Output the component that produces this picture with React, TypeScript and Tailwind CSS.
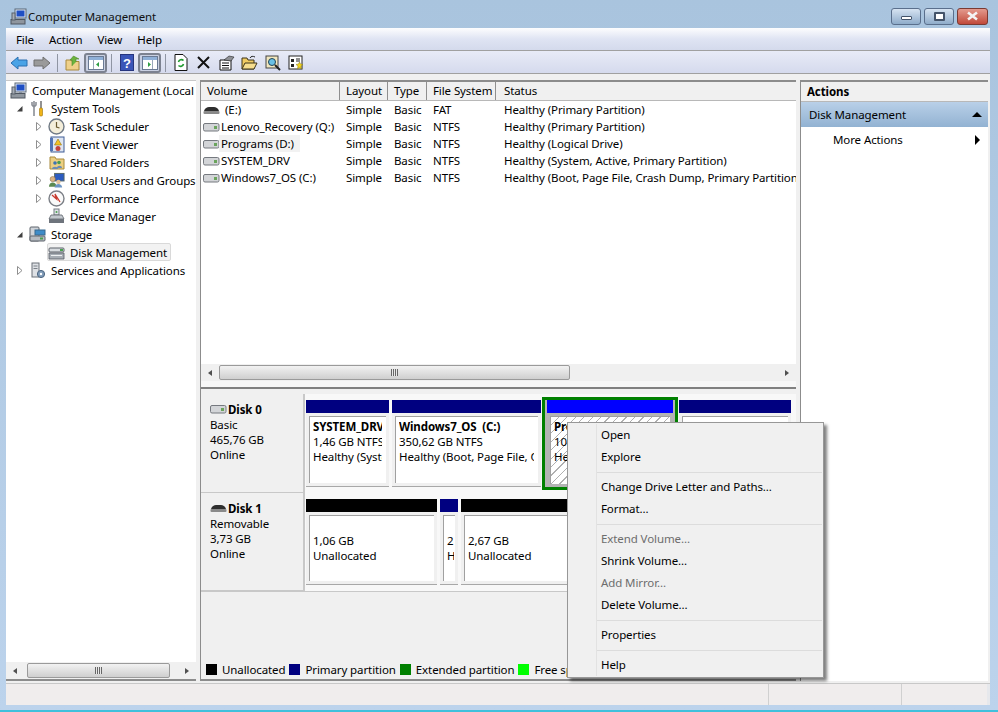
import type { ReactNode } from "react";

const FONT = "font-['Noto_Sans','Open_Sans',sans-serif]";

// small drawn icons -------------------------------------------------------

const ComputerIcon = () => (
  <svg width="17" height="17" viewBox="0 0 17 17">
    <rect x="5" y="1" width="11" height="9" fill="#dfe6f2" stroke="#5b6878" />
    <rect x="6.500" y="2.500" width="8" height="6" fill="#1f4fc4" />
    <rect x="9" y="10" width="3" height="2" fill="#8a94a3" />
    <rect x="1" y="11.500" width="14" height="4.500" fill="#8f969e" stroke="#4e5660" />
    <rect x="2" y="5" width="3" height="7" fill="#a8aeb6" stroke="#59616b" />
  </svg>
);

const ToolsIcon = () => (
  <svg width="16" height="17" viewBox="0 0 16 17">
    <path d="M4 1v5M2 2v3l2 2 2-2V2M4 7v9" fill="none" stroke="#8b8f96" strokeWidth="1.600" />
    <path d="M11 1v7" stroke="#777" strokeWidth="1.600" />
    <rect x="9.500" y="8" width="3" height="8" rx="1" fill="#f0b418" stroke="#9c7208" strokeWidth="0.600" />
  </svg>
);

const ClockIcon = () => (
  <svg width="17" height="17" viewBox="0 0 17 17">
    <circle cx="8.500" cy="8.500" r="7.500" fill="#f4eeda" stroke="#707a86" strokeWidth="1.400" />
    <path d="M8.500 4v5l3 1" fill="none" stroke="#6a5a30" strokeWidth="1.200" />
  </svg>
);

const EventIcon = () => (
  <svg width="16" height="17" viewBox="0 0 16 17">
    <rect x="2" y="1" width="13" height="15" fill="#dfe6f2" stroke="#3f5c96" />
    <rect x="1" y="2" width="3" height="13" fill="#5275b5" />
    <path d="M9 3l3.500 6h-7z" fill="#f4c325" stroke="#96730c" strokeWidth="0.600" />
    <circle cx="9" cy="12.500" r="2.500" fill="#c5433b" />
  </svg>
);

const FolderShareIcon = () => (
  <svg width="16" height="16" viewBox="0 0 16 16">
    <path d="M1 3h5l1 2h8v10H1z" fill="#eccf82" stroke="#a98a3c" />
    <circle cx="6" cy="9" r="1.800" fill="#3c73b4" />
    <circle cx="10" cy="8.500" r="1.800" fill="#4b9a50" />
    <path d="M3 15c0-3 6-3 6 0M8 14c0-3 5-3 5 0" fill="#6a8bb4" />
  </svg>
);

const UsersIcon = () => (
  <svg width="18" height="17" viewBox="0 0 18 17">
    <rect x="7" y="1" width="10" height="8" fill="#2c5bc0" stroke="#566" />
    <circle cx="5" cy="7" r="2.800" fill="#d9b184" stroke="#77613f" strokeWidth="0.500" />
    <path d="M1 15c0-6 8-6 8 0z" fill="#5c8a52" />
    <circle cx="11" cy="10" r="2.300" fill="#e6c39a" />
    <path d="M7 16c0-5 8-5 8 0z" fill="#6d95c4" />
  </svg>
);

const GaugeIcon = () => (
  <svg width="17" height="17" viewBox="0 0 17 17">
    <circle cx="8.500" cy="8.500" r="7.500" fill="#fafafa" stroke="#7b7f86" strokeWidth="1.400" />
    <path d="M4 5l4.500 4L7 4l5 8" fill="none" stroke="#c73a2e" strokeWidth="1.300" />
  </svg>
);

const DeviceIcon = () => (
  <svg width="17" height="16" viewBox="0 0 17 16">
    <rect x="6" y="1" width="5" height="6" fill="#dfe3e8" stroke="#747a82" />
    <circle cx="8.500" cy="4" r="1" fill="#4ba04f" />
    <path d="M3 7h11l2 4H1z" fill="#c3c8ce" stroke="#5d636b" strokeWidth="0.800" />
    <rect x="1" y="11" width="15" height="4" fill="#6e747c" />
  </svg>
);

const DiskMgmtIcon = () => (
  <svg width="17" height="15" viewBox="0 0 17 15">
    <rect x="1" y="3" width="15" height="4" rx="1" fill="#d8dce0" stroke="#5d636b" />
    <rect x="12" y="4" width="3" height="2" fill="#49a14f" />
    <path d="M1 8h15v6H1z" fill="#a7adb4" stroke="#565c64" strokeWidth="0.800" />
    <path d="M3 10.500h11" stroke="#eef0f2" />
  </svg>
);

const StorageIcon = () => (
  <svg width="17" height="16" viewBox="0 0 17 16">
    <rect x="1" y="1" width="9" height="14" rx="1" fill="#cfd3d8" stroke="#5f656d" />
    <rect x="6" y="4" width="10" height="5" fill="#3e8cc8" stroke="#38688e" />
    <rect x="1" y="10" width="15" height="5" rx="1" fill="#b6bbc1" stroke="#5f656d" />
    <rect x="11" y="11.500" width="3" height="2" fill="#4ba04f" />
  </svg>
);

const ServicesIcon = () => (
  <svg width="16" height="17" viewBox="0 0 16 17">
    <rect x="2" y="1" width="7" height="14" fill="#dee1e5" stroke="#6a7078" />
    <path d="M3.500 4h4M3.500 6.500h4" stroke="#7b8189" />
    <circle cx="11" cy="12" r="3.600" fill="#7f9bb8" stroke="#4c6580" />
    <circle cx="11" cy="12" r="1.200" fill="#fff" />
  </svg>
);

const HddIcon = ({ black = false }: { black?: boolean }) => (
  <svg width="17" height="10" viewBox="0 0 17 10" className="shrink-0">
    {black ? (
      <>
        <path d="M1 6c1-3 3-4 5-4h5c2 0 4 1 5 4z" fill="#2e2e2e" />
        <rect x="0.500" y="6" width="16" height="3" rx="1" fill="#8a8a8a" />
      </>
    ) : (
      <>
        <rect x="0.500" y="1.500" width="15.500" height="7.500" rx="1.500" fill="#d3d5d8" stroke="#75797f" />
        <rect x="11" y="4" width="3" height="3" fill="#6aa45c" />
      </>
    )}
  </svg>
);

const Triangle = ({ open }: { open: boolean }) =>
  open ? (
    <svg width="9" height="9" viewBox="0 0 9 9">
      <path d="M7.500 2v5.500H2z" fill="#404040" />
    </svg>
  ) : (
    <svg width="9" height="11" viewBox="0 0 9 11">
      <path d="M2.500 1.500l4.500 4-4.500 4z" fill="#fff" stroke="#8f8f8f" />
    </svg>
  );

// tree --------------------------------------------------------------------

const TREE: { label: string; level: 0 | 1 | 2; arrow?: "open" | "closed"; icon: ReactNode; selected?: boolean }[] = [
  { label: "Computer Management (Local", level: 0, icon: <ComputerIcon /> },
  { label: "System Tools", level: 1, arrow: "open", icon: <ToolsIcon /> },
  { label: "Task Scheduler", level: 2, arrow: "closed", icon: <ClockIcon /> },
  { label: "Event Viewer", level: 2, arrow: "closed", icon: <EventIcon /> },
  { label: "Shared Folders", level: 2, arrow: "closed", icon: <FolderShareIcon /> },
  { label: "Local Users and Groups", level: 2, arrow: "closed", icon: <UsersIcon /> },
  { label: "Performance", level: 2, arrow: "closed", icon: <GaugeIcon /> },
  { label: "Device Manager", level: 2, icon: <DeviceIcon /> },
  { label: "Storage", level: 1, arrow: "open", icon: <StorageIcon /> },
  { label: "Disk Management", level: 2, icon: <DiskMgmtIcon />, selected: true },
  { label: "Services and Applications", level: 1, arrow: "closed", icon: <ServicesIcon /> },
];

const TREE_INDENT = { 0: "pl-[3px]", 1: "pl-[9px]", 2: "pl-[28px]" };

const TreeRow = ({ row }: { row: (typeof TREE)[number] }) => (
  <div className={`flex h-[18px] items-center whitespace-nowrap ${TREE_INDENT[row.level]}`}>
    {row.level > 0 && (
      <span className="flex w-[13px] shrink-0 items-center justify-start">
        {row.arrow && <Triangle open={row.arrow === "open"} />}
      </span>
    )}
    <span
      className={`flex h-[18px] items-center gap-[5px] rounded-[2px] border pr-[3px] ${
        row.selected ? "border-[#d9d9d9] bg-[#f2f2f2]" : "border-transparent"
      }`}
    >
      <span className="flex w-[17px] shrink-0 justify-center">{row.icon}</span>
      <span>{row.label}</span>
    </span>
  </div>
);

// scrollbar ---------------------------------------------------------------

const HScroll = ({ thumbLeft, thumbWidth }: { thumbLeft: string; thumbWidth: string }) => (
  <div className="flex h-[17px] shrink-0 items-center bg-[#f0f0f0]">
    <span className="flex w-[18px] shrink-0 justify-center">
      <span className="h-0 w-0 border-y-[3.500px] border-r-[4px] border-y-transparent border-r-[#505050]" />
    </span>
    <div className={`flex-1 ${thumbLeft}`}>
      <div
        className={`flex h-[15px] items-center justify-center rounded-[2px] border border-[#9a9a9a] bg-gradient-to-b from-[#f2f2f2] to-[#cfcfcf] ${thumbWidth}`}
      >
        <span className="h-[7px] w-[7px] bg-[repeating-linear-gradient(90deg,#666_0,#666_1px,#e8e8e8_1px,#e8e8e8_2px)]" />
      </div>
    </div>
    <span className="flex w-[18px] shrink-0 justify-center">
      <span className="h-0 w-0 border-y-[3.500px] border-l-[4px] border-y-transparent border-l-[#505050]" />
    </span>
  </div>
);

// volume list -------------------------------------------------------------

const COLUMNS = [
  { label: "Volume", w: "w-[139px]" },
  { label: "Layout", w: "w-[48px]" },
  { label: "Type", w: "w-[39px]" },
  { label: "File System", w: "w-[69px]" },
  { label: "Status", w: "flex-1" },
];

const VOLUMES = [
  { name: "(E:)", black: true, fs: "FAT", status: "Healthy (Primary Partition)" },
  { name: "Lenovo_Recovery (Q:)", fs: "NTFS", status: "Healthy (Primary Partition)" },
  { name: "Programs (D:)", fs: "NTFS", status: "Healthy (Logical Drive)", focused: true },
  { name: "SYSTEM_DRV", fs: "NTFS", status: "Healthy (System, Active, Primary Partition)" },
  { name: "Windows7_OS (C:)", fs: "NTFS", status: "Healthy (Boot, Page File, Crash Dump, Primary Partition)" },
];

const VolumeRow = ({ v }: { v: (typeof VOLUMES)[number] }) => (
  <div className="flex h-[17px] items-center whitespace-nowrap">
    <div className="flex w-[139px] shrink-0 items-center pl-[2px]">
      <HddIcon black={v.black} />
      <span className={`-ml-[1px] h-[17px] pl-[2px] pr-[6px] ${v.black ? "ml-[3px]" : ""} ${v.focused ? "bg-[#f2f2f2]" : ""}`}>
        {v.name}
      </span>
    </div>
    <div className="w-[48px] shrink-0 pl-[6px]">Simple</div>
    <div className="w-[39px] shrink-0 pl-[6px]">Basic</div>
    <div className="w-[69px] shrink-0 pl-[6px]">{v.fs}</div>
    <div className="min-w-0 flex-1 overflow-hidden pl-[8px]">{v.status}</div>
  </div>
);

// disk map ----------------------------------------------------------------

const Partition = ({
  w,
  bar = "bg-[#000080]",
  lines,
  center = false,
  selected = false,
  hatched = false,
}: {
  w: string;
  bar?: string;
  lines: string[];
  center?: boolean;
  selected?: boolean;
  hatched?: boolean;
}) => (
  <div
    className={`flex shrink-0 flex-col ${w} ${
      selected ? "-mx-[2px] -my-[3px] border-[3px] border-[#008000] bg-[#b4b4b4] px-[2px]" : ""
    }`}
  >
    <div className={`h-[13px] shrink-0 ${bar}`} />
    <div className={`flex flex-1 p-[3px] ${selected ? "" : "border-b border-[#a8a8a8] bg-[#f0f0f0]"}`}>
      <div
        className={`flex min-w-0 flex-1 border-l border-t border-[#a0a0a0] pl-[3px] ${
          hatched
            ? "bg-[repeating-linear-gradient(135deg,#fff_0,#fff_5px,#b0b0b0_5px,#b0b0b0_6px)]"
            : "bg-white"
        }`}
      >
        <div
          className={`flex min-w-0 flex-1 flex-col overflow-hidden whitespace-pre leading-[15px] ${
            center ? "mr-[1px] justify-center pb-[2px]" : "mr-[4px] pt-[2px]"
          }`}
        >
          {lines.map((line, i) => (
            <span key={i} className={!center && i === 0 ? "font-bold" : ""}>
              {line}
            </span>
          ))}
        </div>
      </div>
    </div>
  </div>
);

const DiskLabel = ({ name, black, lines }: { name: string; black?: boolean; lines: string[] }) => (
  <div className="w-[104px] shrink-0 border-b border-r-2 border-[#c8c8c8] bg-[#f0f0f0] pl-[9px] pt-[7px] leading-[15px]">
    <div className="flex h-[16px] items-center gap-[1px] font-bold">
      <HddIcon black={black} />
      <span>{name}</span>
    </div>
    {lines.map(line => (
      <div key={line}>{line}</div>
    ))}
  </div>
);

const LEGEND = [
  { label: "Unallocated", color: "bg-black" },
  { label: "Primary partition", color: "bg-[#000080]" },
  { label: "Extended partition", color: "bg-[#008000]" },
  { label: "Free space", color: "bg-[#00ff00]" },
];

// context menu ------------------------------------------------------------

const MENU: ({ label: string; disabled?: boolean } | "sep")[] = [
  { label: "Open" },
  { label: "Explore" },
  "sep",
  { label: "Change Drive Letter and Paths..." },
  { label: "Format..." },
  "sep",
  { label: "Extend Volume...", disabled: true },
  { label: "Shrink Volume..." },
  { label: "Add Mirror...", disabled: true },
  { label: "Delete Volume..." },
  "sep",
  { label: "Properties" },
  "sep",
  { label: "Help" },
];

const ContextMenu = () => (
  <div className="absolute left-[567px] top-[422px] w-[257px] border border-[#979797] bg-[#f0f0f0] p-[1px] shadow-[3px_3px_3px_rgba(0,0,0,0.5)]">
    {MENU.map((item, i) =>
      item === "sep" ? (
        <div key={i} className="flex h-[8px] items-center">
          <div className="h-full w-[28px] shrink-0 border-r border-[#e2e2e2]" />
          <div className="h-[1px] flex-1 bg-[#dcdcdc]" />
        </div>
      ) : (
        <div key={i} className="flex h-[22px] items-center">
          <div className="h-full w-[28px] shrink-0 border-r border-[#e2e2e2]" />
          <span className={`pb-[2px] pl-[4px] ${item.disabled ? "text-[#6d6d6d]" : "text-black"}`}>{item.label}</span>
        </div>
      ),
    )}
  </div>
);

// toolbar -----------------------------------------------------------------

const Sep = () => <span className="mx-[3.500px] h-[18px] w-[1px] bg-[#8f95a3]" />;

const ToolBtn = ({ children, pressed }: { children: ReactNode; pressed?: boolean }) => (
  <span
    className={`flex h-[20px] w-[23px] items-center justify-center rounded-[3px] ${
      pressed ? "border-2 border-[#7c8290] bg-[#c9d0e2]" : ""
    }`}
  >
    {children}
  </span>
);

const PaneIcon = ({ side }: { side: "left" | "right" }) => (
  <svg width="16" height="14" viewBox="0 0 16 14">
    <rect x="0.500" y="0.500" width="15" height="13" fill="#fff" stroke="#6a7a94" />
    <rect x="1" y="1" width="14" height="3" fill="#8fb0d8" />
    <path d={side === "left" ? "M5.500 4v9" : "M10.500 4v9"} stroke="#9aa7ba" />
    <path d={side === "left" ? "M11 6v5L8 8.500z" : "M6 6v5l3-2.500z"} fill="#2f9e44" />
  </svg>
);

const Toolbar = () => (
  <div className="flex h-[23px] items-center border-b border-[#a0a0a0] bg-gradient-to-b from-[#e8ebf7] to-[#d5daed] pl-[1px] pt-[1px]">
    <ToolBtn>
      <svg width="18" height="14" viewBox="0 0 18 14">
        <path d="M1 7l7-6v3h9v6H8v3z" fill="#4aa3e6" stroke="#2a6fb0" />
      </svg>
    </ToolBtn>
    <ToolBtn>
      <svg width="18" height="14" viewBox="0 0 18 14">
        <path d="M17 7l-7-6v3H1v6h9v3z" fill="#9a9a9a" stroke="#6f6f6f" />
      </svg>
    </ToolBtn>
    <Sep />
    <ToolBtn>
      <svg width="16" height="16" viewBox="0 0 16 16">
        <path d="M1 5h5l1 1.500h7V15H1z" fill="#efd08a" stroke="#a98a3c" />
        <path d="M7 11V5H5l3.500-4L14 4h-3v3" fill="#6cb33f" stroke="#4d8a2a" strokeWidth="0.600" />
      </svg>
    </ToolBtn>
    <ToolBtn pressed>
      <PaneIcon side="left" />
    </ToolBtn>
    <Sep />
    <ToolBtn>
      <svg width="14" height="17" viewBox="0 0 14 17">
        <rect x="0.500" y="0.500" width="13" height="16" fill="#3a55b8" stroke="#26357e" />
        <text x="7" y="13.500" textAnchor="middle" fontSize="13" fontWeight="700" fill="#fff" fontFamily="Liberation Sans, sans-serif">
          ?
        </text>
      </svg>
    </ToolBtn>
    <ToolBtn pressed>
      <PaneIcon side="right" />
    </ToolBtn>
    <Sep />
    <ToolBtn>
      <svg width="14" height="17" viewBox="0 0 14 17">
        <path d="M1 .5h8l4 4v12H1z" fill="#fff" stroke="#111" />
        <path d="M4.500 8a3 3 0 0 1 5-1.500M9.500 10a3 3 0 0 1-5 1.500" fill="none" stroke="#1f9a2f" strokeWidth="1.600" />
      </svg>
    </ToolBtn>
    <ToolBtn>
      <svg width="15" height="15" viewBox="0 0 15 15">
        <path d="M2 2l11 11M13 2L2 13" stroke="#111" strokeWidth="2" />
      </svg>
    </ToolBtn>
    <ToolBtn>
      <svg width="16" height="16" viewBox="0 0 16 16">
        <path d="M1 5h11v10H1z" fill="#fff" stroke="#111" />
        <path d="M3 8h7M3 10.500h7M3 13h7" stroke="#111" />
        <path d="M5 5l5-4 5 1-3 4z" fill="#8d8f94" stroke="#222" strokeWidth="0.600" />
      </svg>
    </ToolBtn>
    <ToolBtn>
      <svg width="17" height="15" viewBox="0 0 17 15">
        <path d="M1 3h5l1 2h6v9H1z" fill="#f0cb62" stroke="#3d3418" />
        <path d="M1 14l3-6h12l-3 6z" fill="#f6de8e" stroke="#3d3418" />
        <path d="M9 3c1-2 3-2 5-1" fill="none" stroke="#222" />
      </svg>
    </ToolBtn>
    <ToolBtn>
      <svg width="16" height="16" viewBox="0 0 16 16">
        <rect x="1" y="1" width="12" height="12" fill="#f1e7bf" stroke="#444" />
        <circle cx="7" cy="7" r="3.500" fill="#69c1e6" stroke="#245" />
        <path d="M10 10l5 5" stroke="#222" strokeWidth="2" />
      </svg>
    </ToolBtn>
    <ToolBtn>
      <svg width="16" height="16" viewBox="0 0 16 16">
        <rect x="1" y="1" width="13" height="13" fill="#fff" stroke="#222" />
        <path d="M3 4h3v3H3zM3 9h3v3H3z" fill="#222" />
        <path d="M8 4h4M8 6h4" stroke="#222" />
        <path d="M11.500 7l1 2 2.500.5-2 1.500.5 3-2-1.500-2 1.500.5-3-2-1.500L10.500 9z" fill="#f2d31d" stroke="#8b7a10" strokeWidth="0.500" />
      </svg>
    </ToolBtn>
  </div>
);

// window ------------------------------------------------------------------

const CaptionButton = ({ w, tone, children }: { w: string; tone: string; children: ReactNode }) => (
  <span className={`flex h-[17px] items-center justify-center rounded-[3px] border ${w} ${tone}`}>
    {children}
  </span>
);

export default function App() {
  return (
    <div className={`relative flex h-[712px] w-[998px] flex-col overflow-hidden border-b-2 border-[#40c0dc] bg-gradient-to-b from-[#a9c4de] to-[#bcd3ec] text-[11.5px] leading-[17px] tracking-[-0.1px] text-black ${FONT}`}>
      {/* title bar */}
      <div className="flex h-[28px] shrink-0 items-center pl-[10px] pr-[10px] pt-[4px]">
        <ComputerIcon />
        <span className="ml-[1px] text-[#101010]">Computer Management</span>
        <div className="ml-auto flex gap-[3px]">
          <CaptionButton w="w-[30px]" tone="border-[#5a6f8c] bg-gradient-to-b from-[#d6e3f1] to-[#8facca]">
            <span className="mt-[3px] h-[4px] w-[11px] rounded-[1px] border border-[#44546a] bg-white" />
          </CaptionButton>
          <CaptionButton w="w-[30px]" tone="border-[#5a6f8c] bg-gradient-to-b from-[#d6e3f1] to-[#8facca]">
            <span className="h-[9px] w-[11px] rounded-[1px] border-2 border-[#44546a] bg-white" />
          </CaptionButton>
          <CaptionButton w="w-[31px]" tone="border-[#7a3a32] bg-gradient-to-b from-[#e39a8e] to-[#c0483a]">
            <svg width="13" height="10" viewBox="0 0 13 10">
              <path d="M2 1.500l9 7M11 1.500l-9 7" stroke="#f4f4f4" strokeWidth="2.600" />
            </svg>
          </CaptionButton>
        </div>
      </div>

      {/* client area */}
      <div className="mx-[6px] flex w-[984px] flex-col">
        <div className="flex h-[23px] items-center gap-[15px] border-b border-[#a0a0a0] bg-gradient-to-b from-[#fdfdfe] via-[#dfe4f3] to-[#d4daec] pl-[10px]">
          {["File", "Action", "View", "Help"].map(m => (
            <span key={m}>{m}</span>
          ))}
        </div>
        <Toolbar />

        <div className="flex h-[609px] gap-[4px] bg-[#f0f0f0] pb-[2px] pt-[6px]">
          {/* left tree */}
          <div className="flex w-[190px] shrink-0 flex-col border-b-2 border-t border-b-[#8c8c8c] border-t-[#c8c8c8] bg-white">
            <div className="flex-1 overflow-hidden">
              {TREE.map(row => (
                <TreeRow key={row.label} row={row} />
              ))}
            </div>
            <HScroll thumbLeft="pl-[3px]" thumbWidth="w-[143px]" />
          </div>

          {/* centre */}
          <div className="flex w-[596px] shrink-0 flex-col border-b-2 border-l border-t-2 border-[#8c8c8c]">
            <div className="flex h-[307px] shrink-0 flex-col border-b-2 border-[#808080] bg-white">
              <div className="flex h-[19px] shrink-0 border-b border-[#b8b8b8] bg-[#f0f0f0] leading-[18px]">
                {COLUMNS.map(c => (
                  <div
                    key={c.label}
                    className={`whitespace-nowrap border-r border-[#8f8f8f] last:border-r-0 ${c.w} ${c.label === "Status" ? "pl-[8px]" : "pl-[6px]"}`}
                  >
                    {c.label}
                  </div>
                ))}
              </div>
              <div className="flex-1 overflow-hidden">
                {VOLUMES.map(v => (
                  <VolumeRow key={v.name} v={v} />
                ))}
              </div>
              <HScroll thumbLeft="" thumbWidth="w-[351px]" />
              <div className="h-[6px] shrink-0 bg-[#f7f7f7]" />
            </div>

            <div className="flex flex-1 flex-col bg-[#f0f0f0] pt-[5px]">
              <div className="flex h-[99px] shrink-0">
                <DiskLabel name="Disk 0" lines={["Basic", "465,76 GB", "Online"]} />
                <div className="flex min-w-0 flex-1 gap-[3px] bg-[#f8f8f8] py-[6px] pl-[1px]">
                  <Partition w="w-[83px]" lines={["SYSTEM_DRV", "1,46 GB NTFS", "Healthy (System"]} />
                  <Partition w="w-[149px]" lines={["Windows7_OS  (C:)", "350,62 GB NTFS", "Healthy (Boot, Page File, Crash"]} />
                  <Partition w="w-[136px]" bar="bg-[#0000ff]" selected hatched lines={["Programs (D:)", "100 GB NTFS", "Healthy (Logical Drive)"]} />
                  <Partition w="w-[112px]" lines={[]} />
                </div>
              </div>
              <div className="flex h-[99px] shrink-0 border-b border-[#c8c8c8]">
                <DiskLabel name="Disk 1" black lines={["Removable", "3,73 GB", "Online"]} />
                <div className="flex min-w-0 flex-1 gap-[3px] bg-[#f8f8f8] py-[6px] pl-[1px]">
                  <Partition w="w-[131px]" bar="bg-black" center lines={["1,06 GB", "Unallocated"]} />
                  <Partition w="w-[18px]" center lines={["2", "H"]} />
                  <Partition w="w-[331px]" bar="bg-black" center lines={["2,67 GB", "Unallocated"]} />
                </div>
              </div>
              <div className="flex-1" />
              <div className="flex h-[20px] shrink-0 items-center pl-[5px]">
                {LEGEND.map(l => (
                  <span key={l.label} className="mr-[4px] flex items-center gap-[5px] whitespace-nowrap">
                    <span className={`h-[11px] w-[11px] ${l.color}`} />
                    {l.label}
                  </span>
                ))}
              </div>
            </div>
          </div>

          {/* actions */}
          <div className="mr-[2px] flex min-w-0 flex-1 flex-col border-l border-t-2 border-[#8c8c8c] bg-white">
            <div className="flex h-[20px] shrink-0 items-center border-b border-[#b8b8b8] bg-[#f0f0f0] pl-[6px] font-bold">Actions</div>
            <div className="flex h-[25px] shrink-0 items-center justify-between bg-gradient-to-b from-[#b9d0e8] to-[#92b2d2] pl-[8px] pr-[6px]">
              <span>Disk Management</span>
              <span className="h-0 w-0 border-x-[5px] border-b-[5px] border-x-transparent border-b-black" />
            </div>
            <div className="flex h-[25px] shrink-0 items-center justify-between pl-[32px] pr-[8px]">
              <span>More Actions</span>
              <span className="h-0 w-0 border-y-[5px] border-l-[5px] border-y-transparent border-l-black" />
            </div>
          </div>
        </div>

        {/* status bar */}
        <div className="flex h-[22px] border-t border-[#c8c8c8] bg-[#f0eded]">
          <div className="w-[763px] border-r border-[#d0d0d0]" />
          <div className="w-[133px] border-r border-[#d0d0d0]" />
          <div className="flex-1 border-r-[3px] border-[#e6e8ec]" />
        </div>
      </div>

      <ContextMenu />
    </div>
  );
}
